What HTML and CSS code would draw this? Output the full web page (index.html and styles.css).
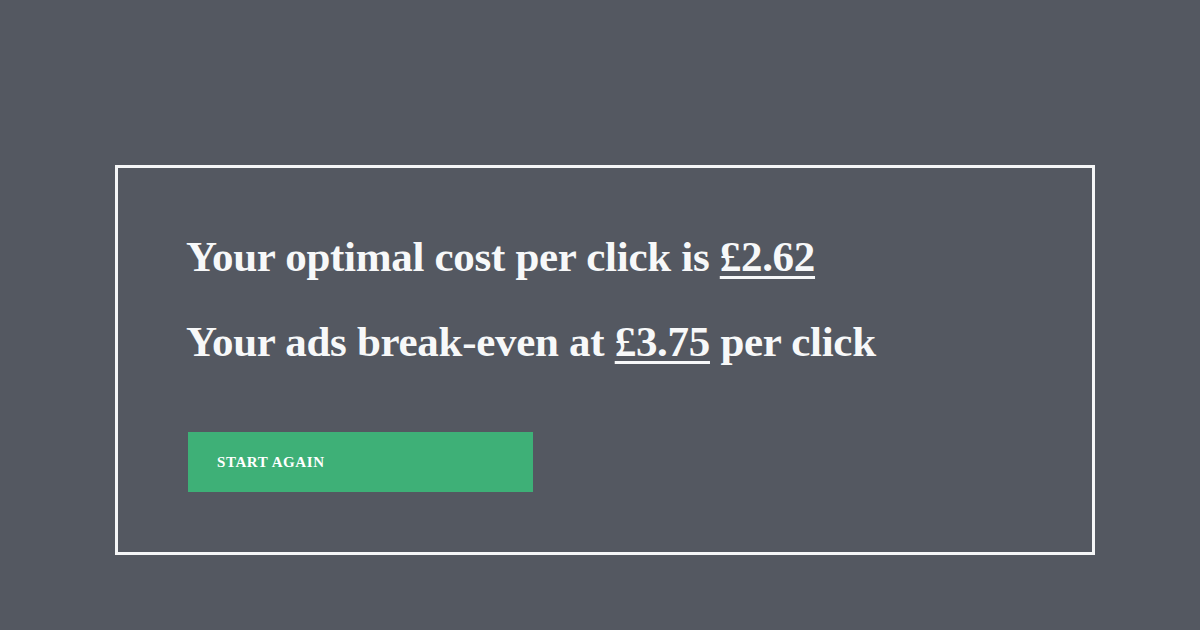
FILE: index.html
```html
<!DOCTYPE html>
<html lang="en">
  <head>
    <meta charset="UTF-8">
    <meta name="viewport" content="width=device-width, initial-scale=1.0">
    <title>Cost per click result</title>
    <link rel="stylesheet" href="styles.css">
  </head>
  <body>
    <div class="result-box">
      <h2 class="result-line">Your optimal cost per click is <span class="amount">£2.62</span></h2>
      <h2 class="result-line">Your ads break-even at <span class="amount">£3.75</span> per click</h2>
      <button class="restart-btn">Start again</button>
    </div>
  </body>
</html>
```

FILE: styles.css
```css
/* Page background and result card */
body {
    margin: 0;
    padding: 165px 0 0 115px;
    height: 630px;
    box-sizing: border-box;
    background-color: #545861;
    font-family: 'Liberation Serif', 'DejaVu Serif', serif;
    color: #f7f8f9;
}

.result-box {
    box-sizing: border-box;
    width: 980px;
    height: 390px;
    border: 3px solid #f5f6f7;
    padding: 64px 70px 0 68px;
}

.result-line {
    margin: 0 0 35px;
    font-size: 43px;
    font-weight: 700;
    line-height: 50px;
    letter-spacing: -0.3px;
}

.amount {
    text-decoration: underline;
    text-decoration-thickness: 3px;
    text-underline-offset: 5px;
}

/* Green reset button */
.restart-btn {
    display: block;
    width: 345px;
    height: 60px;
    margin: 65px 0 0 2px;
    padding: 0 0 0 29px;
    text-align: left;
    background-color: #3eb077;
    color: #ffffff;
    border: none;
    font-family: 'Liberation Serif', 'DejaVu Serif', serif;
    font-size: 15px;
    font-weight: 700;
    text-transform: uppercase;
    letter-spacing: 0.6px;
    cursor: pointer;
}
```
